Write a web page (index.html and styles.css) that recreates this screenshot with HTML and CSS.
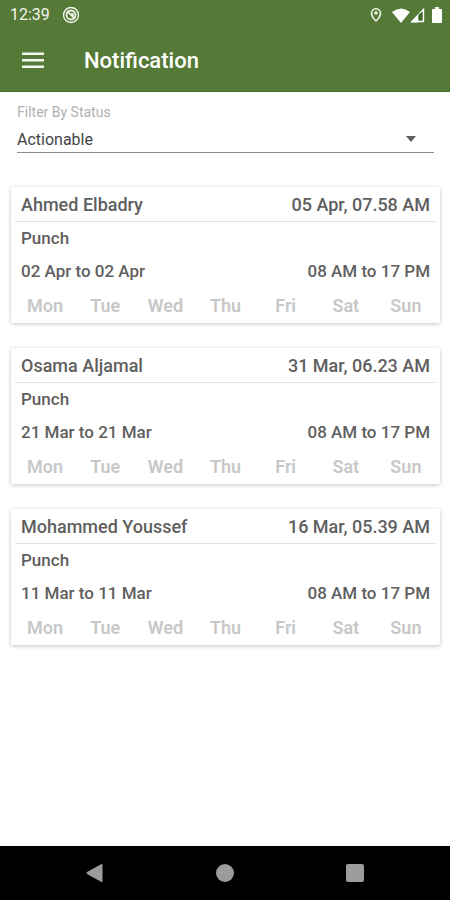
FILE: index.html
```html
<!DOCTYPE html>
<html lang="en">
<head>
<meta charset="utf-8">
<meta name="viewport" content="width=device-width, initial-scale=1">
<title>Notification</title>
<link rel="stylesheet" href="styles.css">
</head>
<body>
<div class="screen">
  <div class="status-bar">
    <span class="clock">12:39</span>
    <svg class="status-app" width="18" height="18" viewBox="0 0 18 18" fill="none" stroke="#f1f5ec" aria-hidden="true">
      <circle cx="9" cy="9" r="7.5" stroke-width="1.4"/>
      <circle cx="9" cy="9" r="4.5" stroke-width="1.8"/>
      <path d="M5 5l8 8M8 8h3v3" stroke-width="1.6"/>
    </svg>
    <div class="status-icons">
      <svg width="12" height="16" viewBox="0 0 12 16" fill="none" stroke="#f1f5ec" aria-hidden="true">
        <path d="M6 14C3.500 11.500 1.500 9 1.500 6.200a4.500 4.500 0 0 1 9 0C10.500 9 8.500 11.500 6 14z" stroke-width="1.600"/>
        <circle cx="6" cy="6" r="1.800" fill="#f1f5ec" stroke="none"/>
      </svg>
      <svg class="wifi" width="18" height="15" viewBox="0 0 18 15" fill="#fff" aria-hidden="true">
        <path d="M0 4Q9-3 18 4L9 15z"/>
      </svg>
      <svg width="15" height="15" viewBox="0 0 15 15" aria-hidden="true">
        <path d="M13.500 1.500v12H2z" fill="none" stroke="#fff" stroke-width="1.400"/>
        <path d="M1 14.500L8.500 6.500v8z" fill="#fff"/>
        <path d="M8.500 6.500L12 4v8H8.500z" fill="#3f6a2c"/>
      </svg>
      <svg class="battery" width="10" height="16" viewBox="0 0 10 16" fill="#fff" aria-hidden="true">
        <path d="M3 0h4v2h2q1 0 1 1v12q0 1-1 1H1q-1 0-1-1V3q0-1 1-1h2z"/>
      </svg>
    </div>
  </div>
  <header class="app-bar">
    <button class="menu" type="button" aria-label="Open menu">
      <svg width="22" height="17" viewBox="0 0 22 17" fill="#f4f8f0" aria-hidden="true">
        <path d="M0 .500h22v2.500H0zM0 7h22v2.500H0zM0 13.500h22V16H0z"/>
      </svg>
    </button>
    <h1>Notification</h1>
  </header>
  <main>
    <div class="filter">
      <label for="status">Filter By Status</label>
      <div class="select-wrap">
        <select id="status"><option>Actionable</option></select>
        <svg class="caret" width="10" height="6" viewBox="0 0 10 6" fill="#606060" aria-hidden="true"><path d="M0 0h10L5 6z"/></svg>
      </div>
    </div>
    <div class="cards">
      <article class="card">
        <div class="card-head"><h2>Ahmed Elbadry</h2><time>05 Apr, 07.58 AM</time></div>
        <p class="row">Punch</p>
        <p class="row"><span>02 Apr to 02 Apr</span><span>08 AM to 17 PM</span></p>
        <div class="days"><span>Mon</span><span>Tue</span><span>Wed</span><span>Thu</span><span>Fri</span><span>Sat</span><span>Sun</span></div>
      </article>
      <article class="card">
        <div class="card-head"><h2>Osama Aljamal</h2><time>31 Mar, 06.23 AM</time></div>
        <p class="row">Punch</p>
        <p class="row"><span>21 Mar to 21 Mar</span><span>08 AM to 17 PM</span></p>
        <div class="days"><span>Mon</span><span>Tue</span><span>Wed</span><span>Thu</span><span>Fri</span><span>Sat</span><span>Sun</span></div>
      </article>
      <article class="card">
        <div class="card-head"><h2>Mohammed Youssef</h2><time>16 Mar, 05.39 AM</time></div>
        <p class="row">Punch</p>
        <p class="row"><span>11 Mar to 11 Mar</span><span>08 AM to 17 PM</span></p>
        <div class="days"><span>Mon</span><span>Tue</span><span>Wed</span><span>Thu</span><span>Fri</span><span>Sat</span><span>Sun</span></div>
      </article>
    </div>
  </main>
  <nav class="system-nav" aria-label="System">
    <button type="button" aria-label="Back"><svg width="20" height="20" viewBox="0 0 20 20" fill="#9c9c9c" aria-hidden="true"><path d="M17.500 1.500v17q0 1-1 .500L2 11q-1-1 0-2L16.500 1q1-.500 1 .500z"/></svg></button>
    <button type="button" aria-label="Home"><svg width="20" height="20" viewBox="0 0 20 20" fill="#9c9c9c" aria-hidden="true"><circle cx="10" cy="10" r="9"/></svg></button>
    <button type="button" aria-label="Recent apps"><svg width="20" height="20" viewBox="0 0 20 20" fill="#9c9c9c" aria-hidden="true"><rect x="1" y="1" width="18" height="18" rx="2"/></svg></button>
  </nav>
</div>
</body>
</html>
```
FILE: styles.css
```css
* { box-sizing: border-box; }

body {
  margin: 0;
  background: #fff;
  color: #5f5f5f;
  font-family: Roboto, "Liberation Sans", sans-serif;
}

h1, h2, p { margin: 0; }

button {
  display: flex;
  padding: 0;
  border: 0;
  background: none;
}

.screen {
  display: flex;
  flex-direction: column;
  min-height: 100vh;
}

.status-bar {
  display: flex;
  align-items: center;
  height: 30px;
  padding: 0 8px 0 10px;
  background: #557937;
}

.clock {
  color: #f1f5ec;
  font-size: 16px;
  line-height: 30px;
}

.status-app { margin-left: 12px; }

.status-icons {
  display: flex;
  align-items: center;
  margin-left: auto;
}

.wifi { margin-left: 10px; }
.battery { margin-left: 7px; }

.app-bar {
  display: flex;
  align-items: center;
  gap: 40px;
  height: 62px;
  padding: 0 22px;
  background: #557937;
  border-bottom: 1px solid #446b25;
}

.app-bar h1 {
  color: #fff;
  font-size: 22px;
  font-weight: 500;
  line-height: 32px;
}

main {
  flex: 1;
  padding: 12px 10px 12px 11px;
}

.filter { padding: 0 6px; }

.filter label {
  display: block;
  color: #b0b0b0;
  font-size: 14px;
  line-height: 16px;
}

.select-wrap {
  position: relative;
  margin-top: 6px;
  border-bottom: 1px solid #8c8c8c;
}

.select-wrap select {
  display: block;
  width: 100%;
  height: 26px;
  padding: 0;
  border: 0;
  background: none;
  color: #444;
  font: 16px Roboto, "Liberation Sans", sans-serif;
  appearance: none;
}

.caret {
  position: absolute;
  top: 10px;
  right: 18px;
  pointer-events: none;
}

.cards {
  display: flex;
  flex-direction: column;
  gap: 25px;
  margin-top: 34px;
}

.card {
  padding: 0 4px;
  border-radius: 2px;
  background: #fff;
  box-shadow: 0 1px 4px rgba(0, 0, 0, 0.24);
  font-weight: 500;
}

.card-head,
.row {
  display: flex;
  justify-content: space-between;
  padding: 0 6px;
}

.card-head {
  padding-top: 2px;
  border-bottom: 1px solid #e2e2e2;
  font-size: 18px;
  line-height: 32px;
}

.card-head h2 {
  font-size: 18px;
  font-weight: 500;
}

.row {
  font-size: 17px;
  line-height: 33px;
}

.days {
  display: grid;
  grid-template-columns: repeat(7, 1fr);
  color: #c8c8c8;
  font-size: 18px;
  font-weight: 600;
  line-height: 35px;
  text-align: center;
}

.system-nav {
  display: flex;
  align-items: center;
  justify-content: space-around;
  height: 54px;
  padding: 0 30px;
  background: #000;
}
```
